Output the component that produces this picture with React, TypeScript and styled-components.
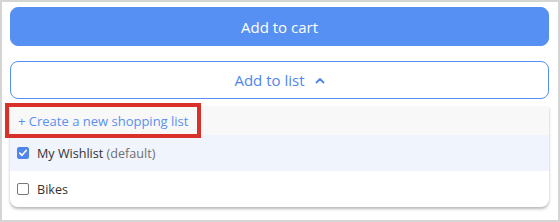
import React from 'react';
import styled, { createGlobalStyle } from 'styled-components';

const GlobalStyle = createGlobalStyle`
  html, body {
    margin: 0;
    padding: 0;
    background: #ffffff;
  }
  * {
    box-sizing: border-box;
  }
`;

const Frame = styled.div`
  position: relative;
  width: 560px;
  height: 222px;
  border: 2px solid #d5d5d5;
  background: #ffffff;
  padding: 5px 9px 0 8px;
  display: flex;
  flex-direction: column;
  font-family: 'Open Sans', 'Noto Sans', sans-serif;
  overflow: hidden;
`;

const Button = styled.button<{ $primary?: boolean }>`
  display: flex;
  align-items: center;
  justify-content: center;
  gap: 10px;
  height: ${({ $primary }) => ($primary ? '39px' : '38px')};
  margin-top: ${({ $primary }) => ($primary ? '0' : '15px')};
  border-radius: 8px;
  border: 1px solid #5690f2;
  background: ${({ $primary }) => ($primary ? '#5690f2' : '#ffffff')};
  color: ${({ $primary }) => ($primary ? '#ffffff' : '#4f86ee')};
  font-family: inherit;
  font-size: 15px;
  padding: 0;
  cursor: pointer;
`;

const Panel = styled.div`
  position: relative;
  margin-top: 7px;
  border-radius: 0 0 8px 8px;
  background: #ffffff;
  box-shadow: 0 2px 3px rgba(0, 0, 0, 0.28);
  display: flex;
  flex-direction: column;
`;

const CreateRow = styled.div`
  height: 29px;
  display: flex;
  align-items: center;
  padding-left: 8px;
  background: #f8f8f8;
  color: #5b8ff0;
  font-size: 13px;
`;

const ListRow = styled.label<{ $active?: boolean }>`
  height: 36px;
  display: flex;
  align-items: center;
  gap: 8px;
  padding-left: 7px;
  background: ${({ $active }) => ($active ? '#eff4fd' : 'transparent')};
  color: #333333;
  font-size: 12.6px;
  border-radius: ${({ $active }) => ($active ? '0' : '0 0 8px 8px')};
`;

const Box = styled.span<{ $checked?: boolean }>`
  width: 12px;
  height: 12px;
  border-radius: 2px;
  border: 1px solid ${({ $checked }) => ($checked ? '#4f86ee' : '#777777')};
  background: ${({ $checked }) => ($checked ? '#4f86ee' : '#ffffff')};
  display: flex;
  align-items: center;
  justify-content: center;
`;

const Muted = styled.span`
  color: #707070;
`;

const Highlight = styled.div`
  position: absolute;
  left: -5px;
  top: -3px;
  width: 196px;
  height: 35px;
  border: 4px solid #d9302a;
  pointer-events: none;
`;

const ChevronUp = () => (
  <svg width="10" height="7" viewBox="0 0 10 7" fill="none">
    <path d="M1.5 5.5 L5 2 L8.5 5.5" stroke="#4f86ee" strokeWidth="1.8" strokeLinecap="round" strokeLinejoin="round" />
  </svg>
);

const Check = () => (
  <svg width="10" height="10" viewBox="0 0 10 10" fill="none">
    <path d="M1.8 5.2 L4 7.3 L8.2 2.5" stroke="#ffffff" strokeWidth="1.7" strokeLinecap="round" strokeLinejoin="round" />
  </svg>
);

export default function App() {
  return (
    <>
      <GlobalStyle />
      <Frame>
        <Button $primary>Add to cart</Button>
        <Button>
          Add to list
          <ChevronUp />
        </Button>
        <Panel>
          <CreateRow>+ Create a new shopping list</CreateRow>
          <ListRow $active>
            <Box $checked>
              <Check />
            </Box>
            <span>
              My Wishlist <Muted>(default)</Muted>
            </span>
          </ListRow>
          <ListRow>
            <Box />
            <span>Bikes</span>
          </ListRow>
          <Highlight />
        </Panel>
      </Frame>
    </>
  );
}
